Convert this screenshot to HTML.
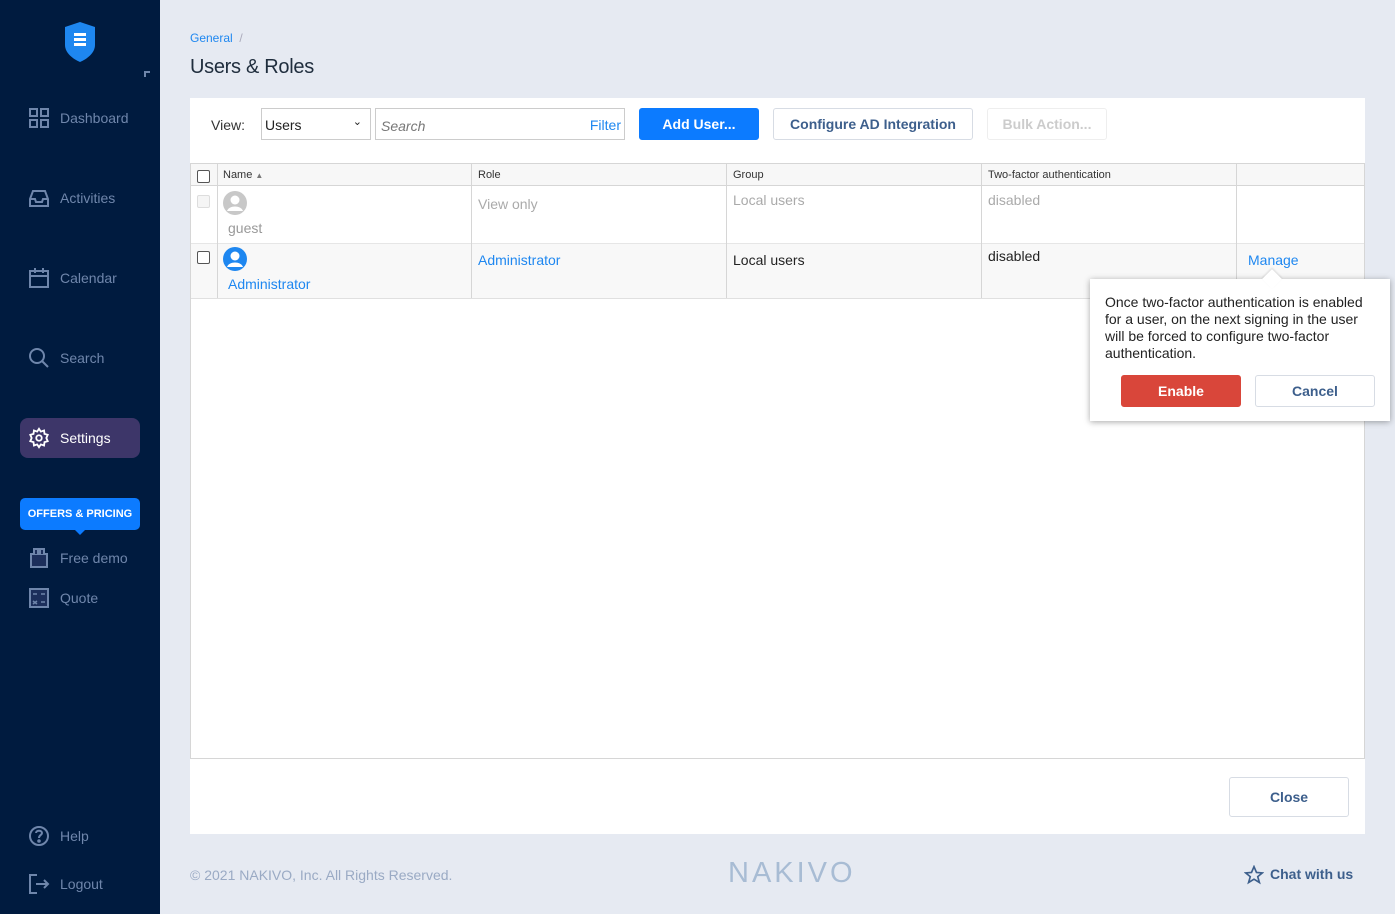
<!DOCTYPE html>
<html><head><meta charset="utf-8"><style>
*{box-sizing:border-box;margin:0;padding:0}
body{width:1395px;height:914px;overflow:hidden;background:#e6eaf2;font-family:"Liberation Sans",sans-serif;position:relative}
.sb{position:absolute;left:0;top:0;width:160px;height:914px;background:#001b3f}
.nav{position:absolute;left:28px;color:#6f86ab;font-size:14px;display:flex;align-items:center;gap:10px}
.nav svg{width:22px;height:22px}
.abs{position:absolute}
.cell{position:absolute;font-size:14px}
.hd{position:absolute;font-size:11px;color:#333;top:169px}
.vl{position:absolute;top:164px;width:1px;height:134px;background:#d6d6d6}
.cb{position:absolute;width:13px;height:13px;border:1px solid #555;border-radius:2px;background:#fff}
.btn{position:absolute;border:1px solid #d7dce4;border-radius:3px;font-weight:bold;font-size:14px;display:flex;align-items:center;justify-content:center;background:#fff}
</style></head><body>
<div class="sb">
 <svg class="abs" style="left:63px;top:21px" width="34" height="42" viewBox="0 0 34 42"><path d="M17 1 L32 6 V24 C32 32 24 38 17 41 C10 38 2 32 2 24 V6 Z" fill="#1e87f0"/><rect x="11" y="12" width="12" height="3" fill="#fff"/><rect x="11" y="17" width="12" height="3" fill="#fff"/><rect x="11" y="22" width="12" height="3" fill="#fff"/></svg>
 <div class="abs" style="left:144px;top:71px;width:6px;height:6px;border-left:2px solid #6f86ab;border-top:2px solid #6f86ab"></div>
 <div class="nav" style="top:107px"><svg viewBox="0 0 22 22" fill="none" stroke="#6f86ab" stroke-width="2"><rect x="2" y="2" width="7" height="7"/><rect x="13" y="2" width="7" height="7"/><rect x="2" y="13" width="7" height="7"/><rect x="13" y="13" width="7" height="7"/></svg>Dashboard</div>
 <div class="nav" style="top:187px"><svg viewBox="0 0 22 22" fill="none" stroke="#6f86ab" stroke-width="2"><path d="M2 12 L5 4 H17 L20 12 V19 H2 Z M2 12 H7 L8 15 H14 L15 12 H20"/></svg>Activities</div>
 <div class="nav" style="top:267px"><svg viewBox="0 0 22 22" fill="none" stroke="#6f86ab" stroke-width="2"><rect x="2" y="4" width="18" height="16"/><path d="M2 9 H20 M7 1 V6 M15 1 V6"/></svg>Calendar</div>
 <div class="nav" style="top:347px"><svg viewBox="0 0 22 22" fill="none" stroke="#6f86ab" stroke-width="2"><circle cx="9" cy="9" r="7"/><path d="M14 14 L20 20"/></svg>Search</div>
 <div class="abs" style="left:20px;top:418px;width:120px;height:40px;background:#3d3669;border-radius:8px"></div>
 <div class="nav" style="top:427px;color:#fff"><svg viewBox="0 0 24 24" fill="none" stroke="#fff" stroke-width="2"><circle cx="12" cy="12" r="3"/><path d="M12 2 L14 5 L17.5 3.8 L18 7.5 L21.5 8.5 L20 12 L21.5 15.5 L18 16.5 L17.5 20.2 L14 19 L12 22 L10 19 L6.5 20.2 L6 16.5 L2.5 15.5 L4 12 L2.5 8.5 L6 7.5 L6.5 3.8 L10 5 Z"/></svg>Settings</div>
 <div class="abs" style="left:20px;top:498px;width:120px;height:32px;background:#0c7bff;border-radius:5px;color:#fff;font-size:11px;font-weight:bold;text-align:center;line-height:32px">OFFERS &amp; PRICING</div>
 <div class="abs" style="left:74px;top:529px;border:6px solid transparent;border-top-color:#0c7bff;border-bottom:0"></div>
 <div class="nav" style="top:547px"><svg viewBox="0 0 22 22" fill="#1c2f5b" stroke="#6f86ab" stroke-width="2"><rect x="3" y="7" width="16" height="13"/><path d="M6 7 V2 H10 V7 M12 7 V2 H16 V7"/></svg>Free demo</div>
 <div class="nav" style="top:587px"><svg viewBox="0 0 22 22" fill="#1c2f5b" stroke="#6f86ab" stroke-width="2"><rect x="2" y="2" width="18" height="18"/><path d="M5 7 H9 M13 7 H17 M5 14 L9 17 M9 14 L5 17 M13 15 H17" stroke-width="1.5"/></svg>Quote</div>
 <div class="nav" style="top:825px"><svg viewBox="0 0 22 22" fill="none" stroke="#6f86ab" stroke-width="2"><circle cx="11" cy="11" r="9"/><path d="M8 8 C8 5 14 5 14 8 C14 10 11 10 11 13" /><circle cx="11" cy="16" r="0.8" fill="#6f86ab"/></svg>Help</div>
 <div class="nav" style="top:873px"><svg viewBox="0 0 22 22" fill="none" stroke="#6f86ab" stroke-width="2"><path d="M9 2 H2 V20 H9 M8 11 H20 M16 7 L20 11 L16 15"/></svg>Logout</div>
</div>

<div class="abs" style="left:190px;top:31px;font-size:12px;color:#1e87f0">General <span style="color:#aab">&nbsp;/</span></div>
<div class="abs" style="left:190px;top:56px;font-size:20px;color:#1f2d3d;letter-spacing:-0.3px">Users &amp; Roles</div>

<div class="abs" style="left:190px;top:98px;width:1175px;height:736px;background:#fff"></div>
<div class="abs" style="left:211px;top:117px;font-size:14px;color:#333">View:</div>
<div class="abs" style="left:261px;top:108px;width:110px;height:32px;border:1px solid #ccc;font-size:14px;padding:8px 3px;color:#222">Users<span style="position:absolute;right:8px;top:6px;font-size:11px">&#8964;</span></div>
<div class="abs" style="left:375px;top:108px;width:250px;height:32px;border:1px solid #ccc;font-size:14px;padding:9px 5px;color:#777;font-style:italic">Search<span style="position:absolute;right:3px;top:8px;color:#1e87f0;font-style:normal">Filter</span></div>
<div class="btn" style="left:639px;top:108px;width:120px;height:32px;background:#0c7bff;border-color:#0c7bff;color:#fff">Add User...</div>
<div class="btn" style="left:773px;top:108px;width:200px;height:32px;color:#3d5f8c">Configure AD Integration</div>
<div class="btn" style="left:987px;top:108px;width:120px;height:32px;color:#ccc;border-color:#eee">Bulk Action...</div>

<div class="abs" style="left:190px;top:163px;width:1175px;height:596px;border:1px solid #d6d6d6"></div>
<div class="abs" style="left:191px;top:164px;width:1173px;height:22px;background:#f7f7f7;border-bottom:1px solid #d6d6d6"></div>
<div class="abs" style="left:191px;top:243px;width:1173px;height:56px;background:#f8f8f8;border-top:1px solid #e6e6e6;border-bottom:1px solid #e0e0e0"></div>
<div class="vl" style="left:217px"></div><div class="vl" style="left:471px"></div><div class="vl" style="left:726px"></div><div class="vl" style="left:981px"></div><div class="vl" style="left:1236px"></div>
<div class="cb" style="left:197px;top:170px"></div>
<div class="cb" style="left:197px;top:195px;border-color:#ddd;background:#f5f5f5"></div>
<div class="cb" style="left:197px;top:251px"></div>
<div class="hd" style="left:223px">Name <span style="font-size:8px;color:#777">&#9650;</span></div>
<div class="hd" style="left:478px">Role</div><div class="hd" style="left:733px">Group</div><div class="hd" style="left:988px">Two-factor authentication</div>

<svg class="abs" style="left:223px;top:191px" width="24" height="24" viewBox="0 0 24 24"><circle cx="12" cy="12" r="12" fill="#c8c8c8"/><circle cx="12" cy="9" r="4.5" fill="#fff"/><path d="M4 20 C6 14 18 14 20 20 Z" fill="#fff"/></svg>
<div class="cell" style="left:228px;top:220px;color:#999">guest</div>
<div class="cell" style="left:478px;top:196px;color:#aaa">View only</div>
<div class="cell" style="left:733px;top:192px;color:#aaa">Local users</div>
<div class="cell" style="left:988px;top:192px;color:#aaa">disabled</div>

<svg class="abs" style="left:223px;top:247px" width="24" height="24" viewBox="0 0 24 24"><circle cx="12" cy="12" r="12" fill="#1e87f0"/><circle cx="12" cy="9" r="4.5" fill="#fff"/><path d="M4 20 C6 14 18 14 20 20 Z" fill="#fff"/></svg>
<div class="cell" style="left:228px;top:276px;color:#1e87f0">Administrator</div>
<div class="cell" style="left:478px;top:252px;color:#1e87f0">Administrator</div>
<div class="cell" style="left:733px;top:252px;color:#222">Local users</div>
<div class="cell" style="left:988px;top:248px;color:#222">disabled</div>
<div class="cell" style="left:1248px;top:252px;color:#1e87f0">Manage</div>

<div class="abs" style="left:1090px;top:279px;width:300px;height:142px;background:#fff;box-shadow:0 1px 6px rgba(0,0,0,.35)"></div>
<div class="abs" style="left:1265px;top:272px;width:14px;height:14px;background:#fff;transform:rotate(45deg);box-shadow:-1px -1px 2px rgba(0,0,0,.12)"></div>
<div class="abs" style="left:1105px;top:294px;width:270px;font-size:14px;line-height:17px;color:#222">Once two-factor authentication is enabled for a user, on the next signing in the user will be forced to configure two-factor authentication.</div>
<div class="btn" style="left:1121px;top:375px;width:120px;height:32px;background:#d9463a;border-color:#d9463a;color:#fff">Enable</div>
<div class="btn" style="left:1255px;top:375px;width:120px;height:32px;color:#3d5f8c">Cancel</div>

<div class="btn" style="left:1229px;top:777px;width:120px;height:40px;color:#3d5f8c">Close</div>

<div class="abs" style="left:190px;top:867px;font-size:14px;color:#9aaac4">© 2021 NAKIVO, Inc. All Rights Reserved.</div>
<div class="abs" style="left:728px;top:857px;font-size:29px;color:#a8bcd4;letter-spacing:3px">NAKIVO</div>
<svg class="abs" style="left:1244px;top:865px" width="20" height="20" viewBox="0 0 24 24"><path d="M12 2 L15 9 L22 9.5 L16.5 14 L18.5 21 L12 17 L5.5 21 L7.5 14 L2 9.5 L9 9 Z" fill="none" stroke="#3d5f8c" stroke-width="2"/></svg>
<div class="abs" style="left:1270px;top:866px;font-size:14px;font-weight:bold;color:#3d5f8c">Chat with us</div>
</body></html>
